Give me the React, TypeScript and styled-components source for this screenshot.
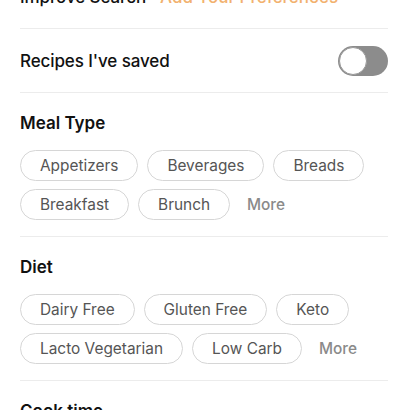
import React from "react";
import styled, { createGlobalStyle } from "styled-components";

const GlobalStyle = createGlobalStyle`
  html, body { margin: 0; padding: 0; background: #ffffff; }
  body { font-family: Inter, "Noto Sans", Roboto, sans-serif; -webkit-font-smoothing: antialiased; }
  * { box-sizing: border-box; }
`;

const Viewport = styled.div`
  width: 408px;
  height: 410px;
  overflow: hidden;
`;

const Page = styled.div`
  margin-top: -35px;
  padding: 0 20px;
  display: flex;
  flex-direction: column;
`;

const Row = styled.div`
  height: 64px;
  display: flex;
  align-items: center;
  justify-content: space-between;
  border-bottom: 1px solid #ececec;
`;

const RowLabel = styled.span`
  font-size: 17px;
  font-weight: 500;
  color: #111;
  letter-spacing: -0.1px;
`;

const Accent = styled.span`
  font-size: 17px;
  font-weight: 500;
  color: #f2b16e;
  margin-left: 14px;
`;

const Toggle = styled.div<{ $on?: boolean }>`
  width: 50px;
  height: 30px;
  border-radius: 15px;
  background: ${(p) => (p.$on ? "#f08a24" : "#8c8c8c")};
  display: flex;
  align-items: center;
  padding: 1px;
  justify-content: ${(p) => (p.$on ? "flex-end" : "flex-start")};
`;

const Knob = styled.div`
  width: 28px;
  height: 28px;
  border-radius: 50%;
  background: #fff;
  border: 1px solid #9a9a9a;
`;

const Section = styled.section`
  padding: 19px 0 16px;
  border-bottom: 1px solid #ececec;
  display: flex;
  flex-direction: column;
  gap: 16px;
`;

const Heading = styled.h2`
  margin: 0;
  font-size: 17px;
  line-height: 22px;
  font-weight: 600;
  color: #111;
`;

const Chips = styled.div`
  display: flex;
  flex-wrap: wrap;
  gap: 8px 9px;
  align-items: center;
`;

const Chip = styled.button`
  height: 31px;
  padding: 0 19px;
  border: 1px solid #d6d6d6;
  border-radius: 16px;
  background: #fff;
  font-family: inherit;
  font-size: 15.4px;
  color: #555;
  display: flex;
  align-items: center;
`;

const More = styled.span`
  font-size: 15.4px;
  font-weight: 500;
  color: #8a8a8a;
  margin-left: 8px;
`;

const sections = [
  { title: "Meal Type", chips: ["Appetizers", "Beverages", "Breads", "Breakfast", "Brunch"] },
  { title: "Diet", chips: ["Dairy Free", "Gluten Free", "Keto", "Lacto Vegetarian", "Low Carb"] },
];

export default function App() {
  return (
    <Viewport>
      <GlobalStyle />
      <Page>
        <Row>
          <div>
            <RowLabel>Improve Search</RowLabel>
            <Accent>Add Your Preferences</Accent>
          </div>
        </Row>
        <Row>
          <RowLabel>Recipes I've saved</RowLabel>
          <Toggle>
            <Knob />
          </Toggle>
        </Row>
        {sections.map((s) => (
          <Section key={s.title}>
            <Heading>{s.title}</Heading>
            <Chips>
              {s.chips.map((c) => (
                <Chip key={c}>{c}</Chip>
              ))}
              <More>More</More>
            </Chips>
          </Section>
        ))}
        <Section>
          <Heading>Cook time</Heading>
        </Section>
      </Page>
    </Viewport>
  );
}
